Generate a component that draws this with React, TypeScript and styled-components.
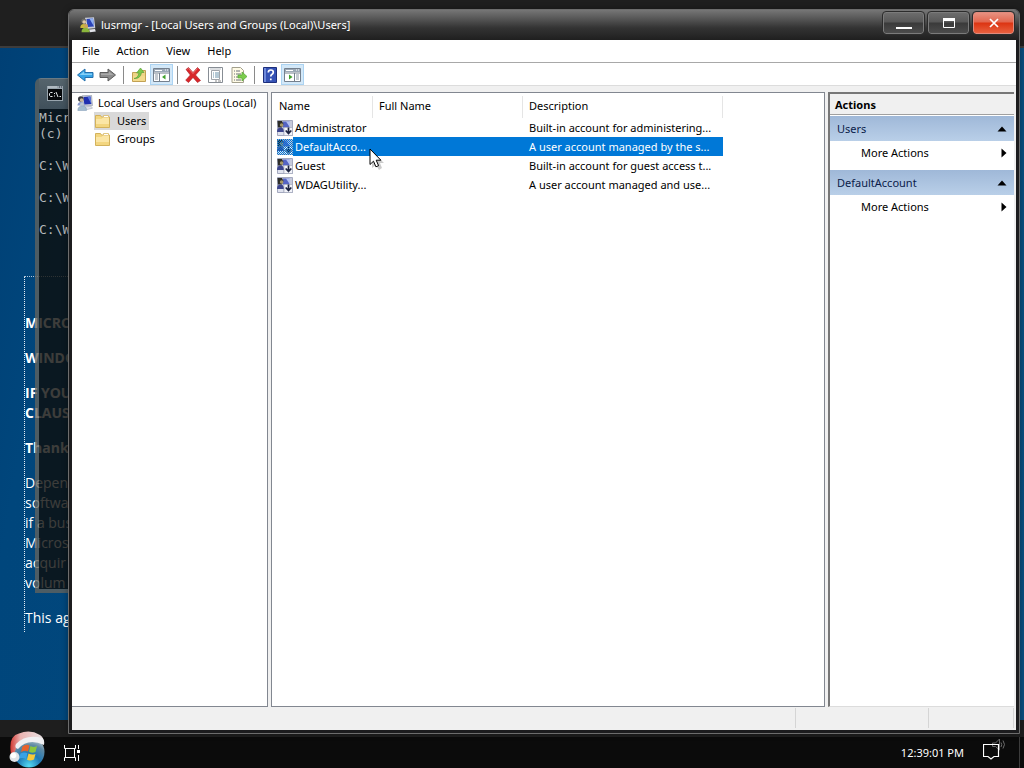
import React from 'react';
import styled, { createGlobalStyle, css } from 'styled-components';

const uiFont = '"Noto Sans", "Open Sans", sans-serif';

const GlobalStyle = createGlobalStyle`
  * { box-sizing: border-box; }
  body { margin: 0; background: #00447a; }
  button { font: inherit; color: inherit; border: 0; background: none; padding: 0; text-align: left; }
  ul { list-style: none; margin: 0; padding: 0; }
`;

/* ---------- desktop ---------- */

const Desktop = styled.div`
  position: relative;
  display: flex;
  flex-direction: column;
  height: 100vh;
  overflow: hidden;
  font-family: ${uiFont};
  font-size: 11px;
  line-height: 18px;
  color: #000;
`;

const TopBand = styled.div`
  height: 48px;
  flex: none;
  background: #1f1f1f;
  border-bottom: 2px solid #3d3c3c;
`;

const Wallpaper = styled.main`
  flex: 1;
  min-height: 0;
  padding: 228px 24px 0;
  background: linear-gradient(100deg, #004075, #00467c 8%, #0a5080);
`;

const License = styled.article`
  height: 356px;
  border-left: 1px dotted #e4edf5;
  border-top: 1px dotted #b4c6d8;
  padding-top: 36px;
  color: #fff;
  font-family: "Open Sans", "Noto Sans", sans-serif;
  font-size: 14px;
  line-height: 20px;
  white-space: nowrap;
`;

const Paragraph = styled.p<{ $strong?: boolean }>`
  margin: 0 0 15px;
  font-weight: ${p => (p.$strong ? 700 : 400)};
`;

const LowerBand = styled.div`
  height: 17px;
  flex: none;
  background: #1e1e1e;
`;

const Taskbar = styled.footer`
  flex: none;
  height: 31px;
  display: flex;
  align-items: center;
  padding: 0 4px 0 8px;
  background: #0b0b0b;
  color: #fff;
`;

const StartButton = styled.button`
  width: 38px;
  height: 38px;
  margin-top: -6px;
`;

const TaskButton = styled.button`
  display: flex;
  margin-left: 18px;
`;

const Tray = styled.div`
  margin-left: auto;
  height: 31px;
  display: flex;
  align-items: center;
  border-right: 1px solid #3c3c3c;
  padding-right: 13px;
  gap: 19px;
`;

const TrayButton = styled.button`
  display: flex;
  margin-top: -7px;
`;

/* ---------- windows ---------- */

const ConsoleWindow = styled.section`
  position: absolute;
  left: 35px;
  top: 78px;
  width: 400px;
  height: 515px;
  border: 4px solid rgba(102, 100, 92, 0.76);
  border-top: 1px solid rgba(140, 140, 135, 0.76);
  border-radius: 6px 6px 0 0;
  display: flex;
  flex-direction: column;
`;

const ConsoleTitle = styled.div`
  height: 30px;
  padding: 7px 8px;
  background: linear-gradient(rgba(112, 110, 104, 0.76), rgba(84, 84, 82, 0.76));
`;

const ConsoleBody = styled.pre`
  flex: 1;
  margin: 0;
  padding-top: 1px;
  background: rgba(13, 12, 10, 0.8);
  color: #b4b8ba;
  font: 13px/16px "DejaVu Sans Mono", monospace;
`;

const Window = styled.section`
  position: absolute;
  inset: 9px 4px 34px 68px;
  display: flex;
  flex-direction: column;
  padding: 0 3px 3px;
  border: 1px solid #6d6d6d;
  border-radius: 6px 6px 0 0;
  background: #1c1c1e;
  box-shadow: 0 0 6px rgba(0, 0, 0, 0.35);
`;

const TitleBar = styled.header`
  height: 30px;
  flex: none;
  margin: 0 -3px;
  padding: 0 5px 0 11px;
  display: flex;
  align-items: center;
  gap: 5px;
  border-radius: 5px 5px 0 0;
  background: linear-gradient(#767676, #555 30%, #333 60%, #1f1f1f);
  color: #fff;
`;

const Title = styled.h1`
  margin: 0;
  flex: 1;
  font-size: 11px;
  font-weight: 400;
  line-height: 18px;
`;

const CaptionButtons = styled.div`
  display: flex;
  gap: 4px;
  align-self: flex-start;
  padding-top: 2px;
`;

const CaptionButton = styled.button<{ $danger?: boolean }>`
  width: 41px;
  height: 22px;
  display: grid;
  place-items: center;
  border-radius: 3px;
  border: 1px solid ${p => (p.$danger ? '#e08a7c' : '#7b7b7b')};
  outline: 1px solid #2c2c2c;
  background: ${p =>
    p.$danger
      ? 'linear-gradient(#e79080, #e2674f 45%, #dc3412 50%, #e8603e)'
      : 'linear-gradient(#6c6c6c, #585858 45%, #3a3a3a 50%, #4c4c4c)'};
`;

const Client = styled.div`
  flex: 1;
  min-height: 0;
  display: flex;
  flex-direction: column;
  background: #f0f0f0;
`;

const MenuBar = styled.nav`
  height: 23px;
  flex: none;
  display: flex;
  align-items: center;
  gap: 1px;
  padding: 0 2px;
  background: #fff;
  border-bottom: 1px solid #a8a8a8;
`;

const MenuItem = styled.button`
  padding: 0 8px;
`;

const Toolbar = styled.div`
  height: 23px;
  flex: none;
  display: flex;
  align-items: center;
  padding: 1px 1px 0;
  background: #fff;
  border-bottom: 1px solid #dcdcdc;
`;

const ToolButton = styled.button<{ $on?: boolean }>`
  width: 23px;
  height: 21px;
  display: grid;
  place-items: center;
  ${p =>
    p.$on &&
    css`
      background: #d3e8f8;
      border: 1px solid #abd3f2;
    `}
`;

const ToolSeparator = styled.span`
  width: 1px;
  height: 18px;
  margin: 0 3px 0 4px;
  background: #8a8a8a;
`;

const Panes = styled.div`
  flex: 1;
  min-height: 0;
  display: grid;
  grid-template-columns: 196px minmax(0, 1fr) 186px;
  gap: 3px;
  padding: 6px 2px 0 0;
`;

const Pane = styled.div`
  background: #fff;
  border: 1px solid #828790;
`;

const TreePane = styled(Pane)`
  padding: 1px 4px;
  border-left: 0;
`;

const TreeItem = styled.button<{ $level?: number; $selected?: boolean }>`
  display: flex;
  align-items: center;
  height: 18px;
  gap: ${p => (p.$level ? 7 : 5)}px;
  margin-left: ${p => (p.$level ? 18 : 0)}px;
  padding: 0 ${p => (p.$level ? 3 : 0)}px 0 1px;
  white-space: nowrap;
  background: ${p => (p.$selected ? '#d9d9d9' : 'none')};
`;

const UserTable = styled.table`
  table-layout: fixed;
  width: 451px;
  border-collapse: separate;
  border-spacing: 0;
  margin-top: 3px;
  white-space: nowrap;

  th {
    height: 22px;
    padding: 0 6px 2px;
    font-weight: 400;
    text-align: left;
    border-right: 1px solid #e5e5e5;
  }
  th:first-child {
    padding-left: 7px;
  }
  td {
    height: 19px;
    padding: 0 0 0 6px;
  }
`;

const UserRow = styled.tr<{ $selected?: boolean }>`
  color: ${p => (p.$selected ? '#fff' : '#000')};
  td { background: ${p => (p.$selected ? '#0078d7' : 'none')}; }
  td:first-child {
    padding: 0 0 0 5px;
    background: ${p => (p.$selected ? 'linear-gradient(90deg, #fff 21px, #0078d7 21px)' : 'none')};
  }
`;

const NameCell = styled.span`
  display: flex;
  align-items: center;
  gap: 2px;
`;

const ActionsPane = styled.aside`
  background: #fff;
  border-top: 2px solid #777;
  border-left: 2px solid #777;
  border-bottom: 1px solid #dcdcdc;
`;

const ActionsHeading = styled.h2`
  margin: 0 0 1px;
  height: 21px;
  padding: 0 5px;
  font-size: 11px;
  font-weight: 700;
  line-height: 21px;
  background: #f0f0f0;
  border-bottom: 1px solid #a0a0a0;
`;

const GroupHeader = styled.button`
  width: 100%;
  height: 25px;
  display: flex;
  align-items: center;
  justify-content: space-between;
  padding: 0 6px 0 7px;
  color: #0b1c4a;
  background: linear-gradient(#9fb8d8, #b9cfe8);
`;

const GroupAction = styled.button`
  width: 100%;
  height: 24px;
  margin-bottom: 5px;
  display: flex;
  align-items: center;
  justify-content: space-between;
  padding: 0 7px 0 31px;
`;

const StatusBar = styled.div`
  height: 23px;
  flex: none;
  display: flex;
  justify-content: flex-end;
  padding: 1px 2px 2px 0;
`;

const StatusCell = styled.span<{ $width: number }>`
  width: ${p => p.$width}px;
  border-left: 1px solid #d5d5d5;
`;

const Pointer = styled.svg`
  position: absolute;
  left: 369px;
  top: 148px;
`;

/* ---------- drawings ---------- */

const ComputerUsersIcon = () => (
  <svg width="16" height="16" viewBox="0 0 16 16" aria-hidden="true">
    <path d="M5 .8l9.500-.6 1 10.300-9 .8z" fill="#c9cdd8" stroke="#8d93a5" strokeWidth=".6" />
    <path d="M6.500 2l7-.6.8 7.600-7 .6z" fill="#1f2fb0" />
    <path d="M10.500 1.700l3-.3.8 7.600z" fill="#5b78e0" />
    <path d="M8 12l6-.8 1.500 2-6 1.500z" fill="#dfe2ea" stroke="#9aa0ae" strokeWidth=".5" />
    <circle cx="3.800" cy="4" r="2.800" fill="#3b3b40" />
    <circle cx="4.600" cy="5" r="1.800" fill="#c9b79c" />
    <path d="M.5 10.500q0-3.500 3.500-3.500t4 3.500z" fill="#8798cc" />
    <circle cx="5" cy="9.500" r="2" fill="#bac6d2" />
    <path d="M.8 15.500q0-4.500 4.400-4.500t4.300 4.500z" fill="#a3bccf" stroke="#7f99b4" strokeWidth=".5" />
  </svg>
);

const TitleIcon = () => (
  <svg width="16" height="16" viewBox="0 0 16 16" aria-hidden="true">
    <path d="M5 .8l9-.5 1.300 11-9 .7z" fill="#c8ccd8" />
    <path d="M6.500 2l6.500-.4 1 8-6.500.5z" fill="#2c44b8" />
    <path d="M9.500 1.700l3.500-.1 1 8z" fill="#8fb0f2" />
    <path d="M9 12.500l6-.6.8 2.600-6 .8z" fill="#e2e4ea" />
    <circle cx="3.800" cy="4" r="2.500" fill="#6f6e68" />
    <circle cx="4.200" cy="5" r="1.800" fill="#dfc9a8" />
    <path d="M.3 11q0-4 3.500-4t4 4z" fill="#c8b63c" />
    <circle cx="6" cy="9" r="2" fill="#c9a25e" />
    <path d="M1.500 15.300q0-4.500 4-4.500t4 4.500z" fill="#8bb63c" />
  </svg>
);

const UserIcon = ({ dither }: { dither?: boolean }) => (
  <svg width="16" height="16" viewBox="0 0 16 16" aria-hidden="true">
    <path d="M.5 .500h15v15H.5z" fill="#c6cadb" stroke="#a4a9bf" />
    <path d="M6 1.500h6.500v6H6z" fill="#5564c4" />
    <path d="M9 1.500h4v6z" fill="#b4c1f0" />
    <path d="M.5 1h4.500l1.500 3-1.500 3.500H1z" fill="#2c2c28" />
    <circle cx="4.600" cy="5" r="1.800" fill="#a89a68" />
    <path d="M0 12q0-4.500 3.500-4.500T7 12z" fill="#3c448c" />
    <path d="M1 12h5v3H1z" fill="#dfe2ee" />
    <path d="M7 7.500h8.500v8H7z" fill="#f2f3f9" stroke="#9ba1b6" strokeWidth=".6" />
    <path d="M11.500 7.500v5M8.700 10.500l2.800 3 2.800-3" fill="none" stroke="#1c2340" strokeWidth="1.700" />
    {dither && (
      <>
        <defs>
          <pattern id="dither" width="2" height="2" patternUnits="userSpaceOnUse">
            <path d="M0 0h1v1H0zM1 1h1v1H1z" fill="#0078d7" />
          </pattern>
        </defs>
        <path d="M0 0h16v16H0z" fill="url(#dither)" shapeRendering="crispEdges" />
      </>
    )}
  </svg>
);

const FolderIcon = () => (
  <svg width="15" height="14" viewBox="0 0 15 14" aria-hidden="true">
    <path d="M.5 1.500h5l1 1.500h8v10.500H.5z" fill="#f3d67f" stroke="#d3b25c" />
    <path d="M8.500 1.500h5v2h-5z" fill="#fff" stroke="#d9b964" strokeWidth=".8" />
    <path d="M1 5h5.500l1.500-1.500h6V13H1z" fill="#fbe6a6" />
    <path d="M1 10h13v3H1z" fill="#f3d680" />
  </svg>
);

const Arrow = ({ forward }: { forward?: boolean }) => (
  <svg width="18" height="14" viewBox="0 0 18 14" aria-hidden="true">
    {forward ? (
      <>
        <path d="M1 4.500h8V1l7.500 6L9 13V9.500H1z" fill="#8c8c8c" stroke="#5d5d5d" strokeLinejoin="round" />
        <path d="M2 5.500h8V3.500L14.500 7H2z" fill="#a9a9a9" />
      </>
    ) : (
      <>
        <path d="M17 4.500H9V1L1.500 7 9 13V9.500h8z" fill="#36a3e6" stroke="#2470ad" strokeLinejoin="round" />
        <path d="M16 5.500H8V3.500L3.500 7H16z" fill="#85d0f7" />
      </>
    )}
  </svg>
);

const UpFolderIcon = () => (
  <svg width="16" height="16" viewBox="0 0 16 16" aria-hidden="true">
    <path d="M1.500 5.500h6l1-2h6v11h-13z" fill="#eed486" stroke="#c2a153" />
    <path d="M2 9h12v5H2z" fill="#f3da8c" />
    <path d="M3 11.500q4-.5 5-5.500H5.500L9.500 1 13 5.500h-2.500Q9.500 12 3 11.500z" fill="#7cc84a" stroke="#5ba23a" strokeWidth=".7" />
  </svg>
);

const PanelIcon = ({ right }: { right?: boolean }) => (
  <svg width="17" height="14" viewBox="0 0 17 14" aria-hidden="true">
    <path d="M.5.5h16v13H.5z" fill="#fff" stroke="#74808e" />
    <path d="M1 1h15v3H1z" fill="#9ba8b6" />
    <path d="M12 2h1M14 2h1M2 2.500h7" stroke="#fff" />
    <path d="M1 5h15" stroke="#74808e" />
    {right ? (
      <>
        <path d="M10.500 5v8" stroke="#74808e" />
        <path d="M12 7h3M12 9h3M12 11h3" stroke="#8b96a3" />
        <path d="M5 6.500v5L8.500 9z" fill="#41a12c" />
      </>
    ) : (
      <>
        <path d="M6.500 5v8" stroke="#74808e" />
        <path d="M2 7h3M2 9h3M2 11h3" stroke="#8b96a3" />
        <path d="M12.500 6.500v5L9 9z" fill="#41a12c" />
      </>
    )}
  </svg>
);

const DeleteIcon = () => (
  <svg width="16" height="16" viewBox="0 0 16 16" aria-hidden="true">
    <path d="M1 2.500L3.500.5 8 5.500 12.500.5 15 3l-4.500 5L15.500 13.500 12.500 15.500 8 10.500 3.500 15.500.7 13.200 5.300 8z" fill="#d9262a" stroke="#a81a20" strokeWidth=".6" />
    <path d="M2.500 2.500l1-1L8 6.500l4.500-5" fill="none" stroke="#f08080" strokeWidth=".8" />
  </svg>
);

const PropertiesIcon = () => (
  <svg width="16" height="16" viewBox="0 0 16 16" aria-hidden="true">
    <path d="M.5.500h14v15H.5z" fill="#fff" stroke="#878d94" />
    <path d="M3.500 3.500h8v9h-8z" fill="#fff" stroke="#a0a5ab" />
    <path d="M2 2h11" stroke="#b9bec4" />
    <path d="M5 6h1M7 6h4M5 8h1M7 8h4M5 10h1M7 10h4" stroke="#6a93ac" />
    <path d="M7 14h2M10 14h3" stroke="#888" />
  </svg>
);

const ExportIcon = () => (
  <svg width="16" height="16" viewBox="0 0 16 16" aria-hidden="true">
    <path d="M1 .5h8.500l3 3v12H1z" fill="#fffbe6" stroke="#a3a08c" />
    <path d="M3 4h1M5 4h4M3 7h1M5 7h5M3 10h1M5 10h3M3 13h1M5 13h5" stroke="#6a7078" />
    <path d="M7 8h4V5l5 4.500-5 4.500v-3H7z" fill="#7ccc4c" stroke="#55a636" strokeWidth=".7" />
  </svg>
);

const HelpIcon = () => (
  <svg width="14" height="16" viewBox="0 0 14 16" aria-hidden="true">
    <path d="M.5.500h13v15H.5z" fill="#3552b5" stroke="#1d2f7c" />
    <path d="M1 1h2v14H1z" fill="#6f8adb" />
    <path d="M5.300 5.500q0-2.500 2.500-2.500t2.500 2.300q0 1.500-1.500 2.200-1 .6-1 2M7.800 11.500v1.700" fill="none" stroke="#fff" strokeWidth="1.700" />
  </svg>
);

const UpTriangle = () => (
  <svg width="12" height="6" viewBox="0 0 12 6" aria-hidden="true">
    <path d="M1.500 5.500L6 .5l4.500 5z" fill="#000" />
  </svg>
);

const RightTriangle = () => (
  <svg width="6" height="10" viewBox="0 0 6 10" aria-hidden="true">
    <path d="M.5 .5L5.500 5l-5 4.500z" fill="#000" />
  </svg>
);

const ConsoleIcon = () => (
  <svg width="16" height="15" viewBox="0 0 16 15" aria-hidden="true">
    <path d="M0 0h16v15H0z" fill="#98a4ad" />
    <path d="M1 3h14v11H1z" fill="#05080b" />
    <path d="M1 1h9" stroke="#c8d0d6" />
    <path d="M12 1h1M14 1h1" stroke="#334" />
    <path d="M5.500 6.500H3.500l-1 1v2l1 1h2M7.500 7v1M7.500 9.500v1M9 6l2 5M12.500 10.500H14" fill="none" stroke="#e8ecef" />
  </svg>
);

const StartOrb = () => (
  <svg width="38" height="38" viewBox="0 0 38 38" aria-hidden="true">
    <defs>
      <radialGradient id="orb" cx="50%" cy="95%" r="85%">
        <stop offset="0" stopColor="#54dcf4" />
        <stop offset=".45" stopColor="#1f78b4" />
        <stop offset=".8" stopColor="#5f8aa4" />
        <stop offset="1" stopColor="#a8bcc6" />
      </radialGradient>
      <linearGradient id="hat" x1="0" y1="0" x2="1" y2="0">
        <stop offset="0" stopColor="#d23a34" />
        <stop offset=".3" stopColor="#eab4b2" />
        <stop offset="1" stopColor="#e9e4e6" />
      </linearGradient>
    </defs>
    <circle cx="21" cy="21" r="15.500" fill="url(#orb)" />
    <path d="M14.500 15.500q3.500-3 7-1l-1.500 6q-3-1.500-7 .5z" fill="#e8622c" />
    <path d="M22.500 15q3 2 6.500 0l-1.500 6q-3.500 1.500-6.500-.3z" fill="#8cc63c" />
    <path d="M12.500 22.500q4-2 7-.3L18 28q-3-2-7-.3z" fill="#39a2e6" />
    <path d="M20.500 22.500q3.500 2 7 .4L26 28.500q-4 2-7 .3z" fill="#f8c93a" />
    <path d="M3 23Q0 5 11 2.500q11-4.500 21 1.500 4 2.500 4 8Q20 4 9 15l-3 8z" fill="url(#hat)" />
    <path d="M8 13Q18 2.500 34 7q3 2 2 7Q20 6.500 10 18q-4-1-2-5z" fill="#f0f0f3" />
    <circle cx="6.500" cy="26" r="5" fill="#dfe3e8" />
    <circle cx="5.500" cy="24.500" r="2.800" fill="#fff" />
  </svg>
);

const TaskViewIcon = () => (
  <svg width="17" height="16" viewBox="0 0 17 16" fill="none" stroke="#fff" aria-hidden="true">
    <path d="M.5 0v3.500h11V0M.5 16v-3.500h11V16M1.500 3.500v9M10.500 3.500v9M14.500 0v4M14.500 10v6" />
    <path d="M13 5h3v3h-3z" fill="#fff" stroke="none" />
  </svg>
);

const NotificationIcon = () => (
  <svg width="23" height="22" viewBox="0 0 23 22" fill="none" aria-hidden="true">
    <path d="M9.500 5h3l4-4v11l-4-3.500h-3zM18 4.500q1.500 2 0 4.500M20 2.500q3 4 0 8" stroke="#6a6a6a" />
    <path d="M.5 6.500h15v12H11L8 21l-3-2.500H.5z" stroke="#fff" strokeWidth="1.200" />
  </svg>
);

/* ---------- data ---------- */

const users = [
  { name: 'Administrator', description: 'Built-in account for administering...' },
  { name: 'DefaultAcco...', description: 'A user account managed by the s...', selected: true },
  { name: 'Guest', description: 'Built-in account for guest access t...' },
  { name: 'WDAGUtility...', description: 'A user account managed and use...' },
];

const actionGroups = ['Users', 'DefaultAccount'];

export default function App() {
  return (
    <Desktop>
      <GlobalStyle />
      <TopBand />
      <Wallpaper>
        <License>
          <Paragraph $strong>MICRO</Paragraph>
          <Paragraph $strong>WINDO</Paragraph>
          <Paragraph $strong>IF YOU<br />CLAUS</Paragraph>
          <Paragraph $strong>Thank</Paragraph>
          <Paragraph>Depen<br />softwa<br />if a bus<br />Micros<br />acquir<br />volum</Paragraph>
          <Paragraph>This ag</Paragraph>
        </License>
      </Wallpaper>
      <LowerBand />
      <Taskbar>
        <StartButton aria-label="Start"><StartOrb /></StartButton>
        <TaskButton aria-label="Task View"><TaskViewIcon /></TaskButton>
        <Tray>
          <time>12:39:01 PM</time>
          <TrayButton aria-label="Notifications"><NotificationIcon /></TrayButton>
        </Tray>
      </Taskbar>

      <ConsoleWindow>
        <ConsoleTitle><ConsoleIcon /></ConsoleTitle>
        <ConsoleBody>{'Micr\n(c)\n\nC:\\W\n\nC:\\W\n\nC:\\W'}</ConsoleBody>
      </ConsoleWindow>

      <Window>
        <TitleBar>
          <TitleIcon />
          <Title>lusrmgr - [Local Users and Groups (Local)\Users]</Title>
          <CaptionButtons>
            <CaptionButton aria-label="Minimize">
              <svg width="16" height="12"><path d="M0 10h16v2H0z" fill="#fff" /></svg>
            </CaptionButton>
            <CaptionButton aria-label="Maximize">
              <svg width="12" height="10"><path d="M.5 1.500h11v8H.5z" fill="none" stroke="#fff" /><path d="M0 0h12v3H0z" fill="#fff" /></svg>
            </CaptionButton>
            <CaptionButton $danger aria-label="Close">
              <svg width="10" height="10"><path d="M1 1l8 8M9 1L1 9" stroke="#fff" strokeWidth="1.700" /></svg>
            </CaptionButton>
          </CaptionButtons>
        </TitleBar>
        <Client>
          <MenuBar>
            {['File', 'Action', 'View', 'Help'].map(label => <MenuItem key={label}>{label}</MenuItem>)}
          </MenuBar>
          <Toolbar>
            <ToolButton aria-label="Back"><Arrow /></ToolButton>
            <ToolButton aria-label="Forward"><Arrow forward /></ToolButton>
            <ToolSeparator />
            <ToolButton aria-label="Up one level"><UpFolderIcon /></ToolButton>
            <ToolButton $on aria-label="Show console tree"><PanelIcon /></ToolButton>
            <ToolSeparator />
            <ToolButton aria-label="Delete"><DeleteIcon /></ToolButton>
            <ToolButton aria-label="Properties"><PropertiesIcon /></ToolButton>
            <ToolButton aria-label="Export list"><ExportIcon /></ToolButton>
            <ToolSeparator />
            <ToolButton aria-label="Help"><HelpIcon /></ToolButton>
            <ToolButton $on aria-label="Show action pane"><PanelIcon right /></ToolButton>
          </Toolbar>
          <Panes>
            <TreePane>
              <ul>
                <li>
                  <TreeItem><ComputerUsersIcon />Local Users and Groups (Local)</TreeItem>
                  <ul>
                    <li><TreeItem $level={1} $selected><FolderIcon />Users</TreeItem></li>
                    <li><TreeItem $level={1}><FolderIcon />Groups</TreeItem></li>
                  </ul>
                </li>
              </ul>
            </TreePane>
            <Pane>
              <UserTable>
                <colgroup>
                  <col width="101" />
                  <col width="150" />
                  <col width="200" />
                </colgroup>
                <thead>
                  <tr><th>Name</th><th>Full Name</th><th>Description</th></tr>
                </thead>
                <tbody>
                  {users.map(user => (
                    <UserRow key={user.name} $selected={user.selected}>
                      <td><NameCell><UserIcon dither={user.selected} />{user.name}</NameCell></td>
                      <td />
                      <td>{user.description}</td>
                    </UserRow>
                  ))}
                </tbody>
              </UserTable>
            </Pane>
            <ActionsPane>
              <ActionsHeading>Actions</ActionsHeading>
              {actionGroups.map(group => (
                <React.Fragment key={group}>
                  <GroupHeader>{group}<UpTriangle /></GroupHeader>
                  <GroupAction>More Actions<RightTriangle /></GroupAction>
                </React.Fragment>
              ))}
            </ActionsPane>
          </Panes>
          <StatusBar>
            <StatusCell $width={133} />
            <StatusCell $width={85} />
            <StatusCell $width={1} />
          </StatusBar>
        </Client>
      </Window>

      <Pointer width="15" height="22" viewBox="0 0 15 22" aria-hidden="true">
        <path d="M3 3v17l4-3 3 5 3-2-2-5h4z" fill="#000" opacity=".2" />
        <path d="M1 1v15.500l3.500-3.300 2.400 5.600 2.700-1.100-2.400-5.500h4.700z" fill="#fff" stroke="#000" />
      </Pointer>
    </Desktop>
  );
}
